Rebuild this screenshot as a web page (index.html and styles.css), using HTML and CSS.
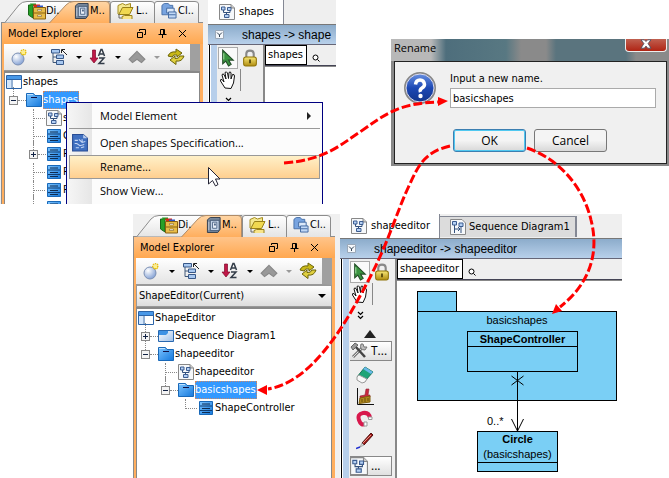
FILE: index.html
```html
<!DOCTYPE html>
<html lang="en">
<head>
<meta charset="utf-8">
<title>Model Explorer - Rename package</title>
<link rel="stylesheet" href="styles.css">
</head>
<body>
<svg class="defs" aria-hidden="true">
  <defs>
    <linearGradient id="g-orange" x2="0" y2="1"><stop offset="0" stop-color="#ffd6a6"/><stop offset="1" stop-color="#ffad5b"/></linearGradient>
    <linearGradient id="g-tab" x2="0" y2="1"><stop offset="0" stop-color="#fff"/><stop offset="1" stop-color="#e4e4e4"/></linearGradient>
    <linearGradient id="g-blue" x2="1" y2="1"><stop offset="0" stop-color="#7cc4ff"/><stop offset="1" stop-color="#1478dc"/></linearGradient>
    <linearGradient id="g-pale" x2="1" y2="1"><stop offset="0" stop-color="#fff"/><stop offset="1" stop-color="#9dbfe8"/></linearGradient>
    <linearGradient id="g-gold" x2="0" y2="1"><stop offset="0" stop-color="#f8e878"/><stop offset="1" stop-color="#b08c10"/></linearGradient>
    <radialGradient id="g-ball" cx=".35" cy=".3" r=".8"><stop offset="0" stop-color="#fff"/><stop offset="1" stop-color="#7898d0"/></radialGradient>
    <linearGradient id="g-quest" x2="0" y2="1"><stop offset="0" stop-color="#6c94e4"/><stop offset=".5" stop-color="#1c48b4"/><stop offset="1" stop-color="#123488"/></linearGradient>
  </defs>
  <symbol id="tabstrip" viewBox="0 0 204 23">
    <path d="M4.500 23 19 5Q22 1.500 27 1.500H110V23Z" fill="url(#g-tab)" stroke="#8c8c8c"/>
    <path d="M110.500 23V4Q110.500 1.500 113 1.500H151Q154.500 1.500 154.500 4V23M154.500 23V4Q154.500 1.500 157 1.500H195Q198.500 1.500 198.500 4V23" fill="url(#g-tab)" stroke="#8c8c8c"/>
    <path d="M49 23.500 66 5Q69 1.500 74 1.500H106Q109.500 1.500 109.500 5V23.500Z" fill="url(#g-orange)" stroke="#b08c68"/>
  </symbol>
  <symbol id="i-drawers" viewBox="0 0 18 18">
    <path d="M.500 3V13L5 16V3Z" fill="#28a028" stroke="#186818"/>
    <path d="M2 1.500H8V4H3Z" fill="#209820"/><path d="M5 2.500H12V5H6Z" fill="#d82818"/><path d="M9 3.500H15V6H9Z" fill="#3058c8"/>
    <path d="M5.500 5.500H17.500V17H5.500Z" fill="#e8bc48" stroke="#886010"/><path d="M6 11H17" stroke="#886010"/><path d="M9.500 7.500H13.500V9H9.500ZM9.500 13H13.500V14.500H9.500Z" fill="#fff" stroke="#806020" stroke-width=".6"/>
  </symbol>
  <symbol id="i-safe" viewBox="0 0 16 17">
    <path d="M1 3 4 .500H14.500V13L12 16.500H1Z" fill="#78889c" stroke="#303c4c"/><path d="M4 3.500H13.500V14.500H4Z" fill="#c4d4e8" stroke="#405470"/>
    <path d="M6.500 5.500H11V12H6.500Z" fill="#eef4fc" stroke="#506888"/><path d="M8 7H10V9H8Z" fill="#506888"/><path d="M2.500 5V14" stroke="#cbd4df"/>
  </symbol>
  <symbol id="i-folders" viewBox="0 0 17 18">
    <path d="M1.500 12V3.500L6 1.500 9 3 14 1.500V8" fill="#f4e890" stroke="#a48c20"/><path d="M2 13 6 5.500H16.500L13 12.500H2Z" fill="#f0d850" stroke="#988018"/>
    <path d="M5.500 17V14.500L8 13.500H15.500V17" fill="#f8e488" stroke="#988018"/><path d="M2.500 12V16H5" fill="none" stroke="#666"/>
  </symbol>
  <symbol id="i-classes" viewBox="0 0 16 17">
    <path d="M.500 12.500V2.500L3 .500H7L9 2.500H12V12.500Z" fill="#78a4e0" stroke="#4870a8"/><path d="M5.500 5.500H13.500V10.500H5.500Z" fill="#dce9fa" stroke="#4068a0"/><path d="M7.500 9.500H15.500V16H7.500Z" fill="#c0d8f6" stroke="#4068a0"/><path d="M8 12.500H15" stroke="#4068a0"/>
  </symbol>
  <symbol id="i-newball" viewBox="0 0 18 18">
    <circle cx="7" cy="11" r="6" fill="url(#g-ball)" stroke="#7c90b4"/>
    <path d="M9 4.500H16M12.500 1V8M10 2 15 7M15 2 10 7" stroke="#e8c010" stroke-width="1.500" stroke-dasharray="1.500 1"/><path d="M11 3H14V6H11Z" fill="#fff088"/>
  </symbol>
  <symbol id="i-hier" viewBox="0 0 18 18">
    <path d="M3 5V14.500H7M3 9H7" fill="none" stroke="#405878"/><path d="M1.500 1.500H9.500V5H1.500ZM6.500 7H13.500V10.500H6.500ZM6.500 12.500H13.500V16.500H6.500Z" fill="#a8c8f0" stroke="#385888"/><path d="M17 7 12 2M11.500 5V1.500H15" fill="none" stroke="#222"/>
  </symbol>
  <symbol id="i-sort" viewBox="0 0 17 18">
    <path d="M3 2H6V10H8.500L4.500 15 .500 10H3Z" fill="#c01848" stroke="#800828" stroke-width=".7"/><path d="M9 8 11.500 1.500H12.500L15 8M10 6H14M9.500 10H14.500L9.500 15.500H15" fill="none" stroke="#333c48" stroke-width="1.500"/>
  </symbol>
  <symbol id="i-up" viewBox="0 0 16 12"><path d="M8 1 15 8 12 11 8 8 4 11 1 8Z" fill="#999" stroke="#888"/></symbol>
  <symbol id="i-refresh" viewBox="0 0 18 18">
    <path d="M1 8Q3 3 9 4V1L15 5 10 9V7Q6 6 5 9Z" fill="#c8b818" stroke="#6c6408"/><path d="M17 8Q15 14 9 13V16.500L3 12 8 8V10.500Q12 11 13 8Z" fill="#e0d040" stroke="#6c6408"/>
  </symbol>
  <symbol id="i-root" viewBox="0 0 16 16"><path d="M.500 1.500H15.500V14.500H.500Z" fill="#fff" stroke="#2c64a8"/><path d="M1 2H15V5H1Z" fill="#4898e8"/><path d="M6 5.500V14M1 5.500H15" stroke="#2c64a8"/><path d="M1 6H5V14H1Z" fill="#d4e6fa"/></symbol>
  <symbol id="i-package" viewBox="0 0 16 16"><path d="M.500 14.500V1.500H7.500L9 3.500H15.500V14.500Z" fill="url(#g-blue)" stroke="#1868b8"/><path d="M5 5.500H11" stroke="#114"/><path d="M1 2.500H7" stroke="#bfe2ff"/></symbol>
  <symbol id="i-frame" viewBox="0 0 16 16"><path d="M.500 2.500H15.500V13.500H.500Z" fill="url(#g-pale)" stroke="#2868b0"/><path d="M1 3H10V5L8 7H1Z" fill="#3e92e4"/></symbol>
  <symbol id="i-class" viewBox="0 0 14 16"><path d="M.500 1.500H13.500V14.500H.500Z" fill="url(#g-blue)" stroke="#1868b8"/><path d="M1 6H13M1 10.500H13" stroke="#103c70"/><path d="M3 4H11M3 8.500H11M3 12.500H11" stroke="#102c50"/></symbol>
  <symbol id="i-diagram" viewBox="0 0 16 16"><path d="M.500.500H12L15.500 4V15.500H.500Z" fill="#f6f8fa" stroke="#888"/><path d="M12 .500V4H15.500" fill="#ccc" stroke="#888"/><path d="M4.500 6V8.500H11V6M7.500 8V11" fill="none" stroke="#33507c"/><path d="M2.500 3H6V6H2.500ZM8.500 3.500H12V6.500H8.500ZM5.500 10.500H10V13.500H5.500Z" fill="#b4d0f4" stroke="#3c5c90"/></symbol>
  <symbol id="i-mini" viewBox="0 0 9 9"><path d="M.500.500H8.500V8.500H.500Z" fill="#f4f7fb" stroke="#9aa8b8"/><path d="M2 2.500 4.500 5 7 2.500M4.500 5V7" fill="none" stroke="#345"/></symbol>
  <symbol id="i-seq" viewBox="0 0 16 16"><path d="M.500.500H12L15.500 4V15.500H.500Z" fill="#f6f8fa" stroke="#888"/><path d="M4.500 6V14M11 7V14M5 10H10M8 8 10 10 8 12" fill="none" stroke="#33507c"/><path d="M2.500 2.500H6.500V6H2.500ZM9 4H13V7.500H9Z" fill="#b4d0f4" stroke="#3c5c90"/></symbol>
  <symbol id="i-spec" viewBox="0 0 16 17"><path d="M1 .500H11L15 4V16H1Z" fill="#4070c0" stroke="#284c94"/><path d="M3 6H6M7 5 10 8 13 7M3 9H5L8 11 12 10M4 13H7M9 13 12 12M10 5V8" fill="none" stroke="#c4d6f4"/><path d="M11 .500V4H15" fill="#b8ccee"/></symbol>
  <symbol id="i-restore" viewBox="0 0 11 11"><path d="M3.500 3V1.500H9.500V6.500H8M1.500 4.500H6.500V9.500H1.500Z" fill="none" stroke="#000"/></symbol>
  <symbol id="i-pin" viewBox="0 0 11 11"><path d="M3.500 6V1.500H7.500V6M6.500 2V6M1.500 6.500H9.500M5.500 7V10" fill="none" stroke="#000"/></symbol>
  <symbol id="i-close" viewBox="0 0 9 9"><path d="M1 1 8 8M8 1 1 8" stroke="#000"/></symbol>
  <symbol id="i-pointer" viewBox="0 0 14 17"><path d="M2 1V14L5 11.500 7.500 16 10 14.500 7.500 10.500H12Z" fill="#3a9440" stroke="#244c28"/><path d="M3 4V10" stroke="#a0dca0"/></symbol>
  <symbol id="i-lock" viewBox="0 0 14 17"><path d="M3.500 8V4.500Q3.500 1.500 7 1.500T10.500 4.500V8" fill="none" stroke="#888" stroke-width="2"/><rect x="1" y="7.500" width="12" height="8.500" rx="2" fill="url(#g-gold)" stroke="#907408"/><path d="M7 10V13.500" stroke="#443804" stroke-width="1.500"/></symbol>
  <symbol id="i-hand" viewBox="0 0 18 20"><path d="M6 18 1.500 11Q1 9 3 9.500L5 12 3 5Q3.500 3 5 4.500L7 9 6 2.500Q7.500 1 8.500 3L9.500 8.500 10 2.500Q11.500 1 12 3L12 9 13.500 4.500Q15.500 4 15.500 6L14.500 13 12 18.500Z" fill="#fff" stroke="#111"/></symbol>
  <symbol id="i-chev" viewBox="0 0 7 9"><path d="M1 1 3.500 3.500 6 1M1 5 3.500 7.500 6 5" fill="none" stroke="#000" stroke-width="1.200"/></symbol>
  <symbol id="i-search" viewBox="0 0 8 8"><circle cx="3.500" cy="3.500" r="2.500" fill="#fff" stroke="#000"/><path d="M5.500 5.500 7.500 7.500" stroke="#000"/></symbol>
  <symbol id="i-tools" viewBox="0 0 18 18"><path d="M3 15 12 6" stroke="#777" stroke-width="3"/><path d="M3 15 12 6" stroke="#ddd"/><path d="M5 4 15 15" stroke="#444" stroke-width="2.500"/><path d="M1 5 5 1 8 3 3 8Z" fill="#999" stroke="#666"/><path d="M11 2Q9 8 15 8L17 5 14 5 13 2Z" fill="#bbb" stroke="#777"/></symbol>
  <symbol id="i-eraser" viewBox="0 0 18 18"><path d="M1 11 9 1 17 6 9 15Z" fill="#20a478" stroke="#187458"/><path d="M9 1 17 6 15 8 7 3Z" fill="#68b8e8"/><path d="M1 11 3 9 11 13 9 16 6 17 1 14Z" fill="#f8f8f8" stroke="#999"/></symbol>
  <symbol id="i-brush" viewBox="0 0 18 18"><path d="M1.500 0V16.500H18" fill="none" stroke="#111"/><path d="M10 1H13L12 7H14V9L4 11V8L9 7Z" fill="#c82840" stroke="#902030" stroke-width=".6"/><path d="M4 10 14 8V14L3 15.500Z" fill="#b08820" stroke="#80600c"/><path d="M6 11V14M9 10V14M12 10V13" stroke="#685008"/></symbol>
  <symbol id="i-magnet" viewBox="0 0 18 18"><path d="M14 8Q13 2 7 3T3 10T9 14" fill="none" stroke="#d8184c" stroke-width="4"/><path d="M12.500 7H16V9.500H12.500ZM8 12H11V16H8Z" fill="#fff" stroke="#999"/></symbol>
  <symbol id="i-pen" viewBox="0 0 18 18"><path d="M6 11 15 1 17 3 8 13Z" fill="#a01818" stroke="#501010"/><path d="M7 11 15 3" stroke="#e89080"/><path d="M6 11 8 13 4 15Z" fill="#ddd" stroke="#666" stroke-width=".5"/><path d="M4 15 0 16.500" stroke="#2030d0" stroke-width="1.500"/></symbol>
</svg>

<main class="desktop">

  <section class="shot shot-first">
    <aside class="explorer">
      <div class="tabs">
        <svg class="strip"><use href="#tabstrip"/></svg>
        <button class="tab tab-di"><svg class="i18"><use href="#i-drawers"/></svg>Di.</button>
        <button class="tab tab-mo"><svg class="i16"><use href="#i-safe"/></svg>M..</button>
        <button class="tab tab-lo"><svg class="i18"><use href="#i-folders"/></svg>L..</button>
        <button class="tab tab-cl"><svg class="i16"><use href="#i-classes"/></svg>Cl..</button>
      </div>
      <div class="panel">
        <header class="panel-title"><h2>Model Explorer</h2>
          <button aria-label="Restore"><svg class="i11"><use href="#i-restore"/></svg></button>
          <button aria-label="Pin"><svg class="i11"><use href="#i-pin"/></svg></button>
          <button aria-label="Close"><svg class="i9"><use href="#i-close"/></svg></button>
        </header>
        <div class="toolbar">
          <button aria-label="New"><svg class="i18"><use href="#i-newball"/></svg><i class="caret"></i></button>
          <button aria-label="Structure"><svg class="i18"><use href="#i-hier"/></svg><i class="caret"></i></button>
          <button aria-label="Sort"><svg class="i18"><use href="#i-sort"/></svg><i class="caret"></i></button>
          <button aria-label="Up"><svg class="i18"><use href="#i-up"/></svg><i class="caret dim"></i></button>
          <button aria-label="Refresh"><svg class="i18"><use href="#i-refresh"/></svg></button>
        </div>
        <ul class="tree">
          <li class="row"><svg class="i16"><use href="#i-root"/></svg>shapes</li>
          <li class="row d1"><i class="box"></i><i class="dots"></i><svg class="i16"><use href="#i-package"/></svg><span class="picked">shapes</span></li>
          <li class="row d2"><i class="dots long"></i><svg class="i16"><use href="#i-diagram"/></svg>s</li>
          <li class="row d2"><i class="dots long"></i><svg class="i16"><use href="#i-class"/></svg>C</li>
          <li class="row d2"><i class="box plus"></i><i class="dots"></i><svg class="i16"><use href="#i-class"/></svg>P</li>
          <li class="row d2"><i class="dots long"></i><svg class="i16"><use href="#i-class"/></svg>P</li>
          <li class="row d2"><i class="dots long"></i><svg class="i16"><use href="#i-class"/></svg>P</li>
          <li class="row d2"><i class="box plus"></i><i class="dots"></i><svg class="i16"><use href="#i-class"/></svg></li>
        </ul>
      </div>
    </aside>
    <div class="editor">
      <div class="etabs"><button class="etab on"><svg class="i16"><use href="#i-diagram"/></svg>shapes</button></div>
      <div class="crumb"><svg class="i9"><use href="#i-mini"/></svg><span>shapes -&gt; shape</span></div>
      <div class="work">
        <div class="palette">
          <div class="pair"><button class="sel" aria-label="Select"><svg class="i18"><use href="#i-pointer"/></svg></button><button aria-label="Lock"><svg class="i18"><use href="#i-lock"/></svg></button></div>
          <div class="pair"><button class="pan" aria-label="Pan"><svg class="i20"><use href="#i-hand"/></svg></button></div>
          <button class="more" aria-label="More"><svg class="i9"><use href="#i-chev"/></svg></button>
        </div>
        <div class="sheet">
          <div class="namebar"><span>shapes</span><svg class="i8"><use href="#i-search"/></svg></div>
          <div class="canvas"></div>
        </div>
      </div>
    </div>
    <ul class="menu" role="menu">
      <li><button>Model Element<i class="sub"></i></button></li>
      <li class="ruled"><button><svg class="i18"><use href="#i-spec"/></svg>Open shapes Specification...</button></li>
      <li><button class="hot">Rename...</button></li>
      <li><button>Show View...</button></li>
    </ul>
  </section>

  <section class="shot shot-second">
    <aside class="explorer">
      <div class="tabs">
        <svg class="strip"><use href="#tabstrip"/></svg>
        <button class="tab tab-di"><svg class="i18"><use href="#i-drawers"/></svg>Di.</button>
        <button class="tab tab-mo"><svg class="i16"><use href="#i-safe"/></svg>M..</button>
        <button class="tab tab-lo"><svg class="i18"><use href="#i-folders"/></svg>L..</button>
        <button class="tab tab-cl"><svg class="i16"><use href="#i-classes"/></svg>Cl..</button>
      </div>
      <div class="panel">
        <header class="panel-title"><h2>Model Explorer</h2>
          <button aria-label="Restore"><svg class="i11"><use href="#i-restore"/></svg></button>
          <button aria-label="Pin"><svg class="i11"><use href="#i-pin"/></svg></button>
          <button aria-label="Close"><svg class="i9"><use href="#i-close"/></svg></button>
        </header>
        <div class="toolbar">
          <button aria-label="New"><svg class="i18"><use href="#i-newball"/></svg><i class="caret"></i></button>
          <button aria-label="Structure"><svg class="i18"><use href="#i-hier"/></svg><i class="caret"></i></button>
          <button aria-label="Sort"><svg class="i18"><use href="#i-sort"/></svg><i class="caret"></i></button>
          <button aria-label="Up"><svg class="i18"><use href="#i-up"/></svg><i class="caret dim"></i></button>
          <button aria-label="Refresh"><svg class="i18"><use href="#i-refresh"/></svg></button>
        </div>
        <div class="combo"><select aria-label="Project"><option>ShapeEditor(Current)</option></select><i class="caret"></i></div>
        <ul class="tree">
          <li class="row"><svg class="i16"><use href="#i-root"/></svg>ShapeEditor</li>
          <li class="row d1"><i class="box plus"></i><i class="dots"></i><svg class="i16"><use href="#i-frame"/></svg>Sequence Diagram1</li>
          <li class="row d1"><i class="box"></i><i class="dots"></i><svg class="i16"><use href="#i-package"/></svg>shapeeditor</li>
          <li class="row d2"><i class="dots long"></i><svg class="i16"><use href="#i-diagram"/></svg>shapeeditor</li>
          <li class="row d2"><i class="box"></i><i class="dots"></i><svg class="i16"><use href="#i-package"/></svg><span class="picked">basicshapes</span></li>
          <li class="row d3"><i class="dots long last"></i><svg class="i16"><use href="#i-class"/></svg>ShapeController</li>
        </ul>
      </div>
    </aside>
    <div class="editor">
      <div class="etabs"><button class="etab on"><svg class="i16"><use href="#i-diagram"/></svg>shapeeditor</button><button class="etab"><svg class="i16"><use href="#i-seq"/></svg>Sequence Diagram1</button></div>
      <div class="crumb"><svg class="i9"><use href="#i-mini"/></svg><span>shapeeditor -&gt; shapeeditor</span></div>
      <div class="work">
        <div class="palette">
          <div class="pair"><button class="sel" aria-label="Select"><svg class="i18"><use href="#i-pointer"/></svg></button><button aria-label="Lock"><svg class="i18"><use href="#i-lock"/></svg></button></div>
          <div class="pair"><button class="pan" aria-label="Pan"><svg class="i20"><use href="#i-hand"/></svg></button></div>
          <button class="more" aria-label="More"><svg class="i9"><use href="#i-chev"/></svg></button>
          <i class="scroll-up"></i>
          <button class="group"><svg class="i18"><use href="#i-tools"/></svg>T...</button>
          <div class="tools">
            <button aria-label="Eraser"><svg class="i18"><use href="#i-eraser"/></svg></button>
            <button aria-label="Sweeper"><svg class="i18"><use href="#i-brush"/></svg></button>
            <button aria-label="Magnet"><svg class="i18"><use href="#i-magnet"/></svg></button>
            <button aria-label="Pen"><svg class="i18"><use href="#i-pen"/></svg></button>
          </div>
          <button class="group"><svg class="i18"><use href="#i-diagram"/></svg>...</button>
        </div>
        <div class="sheet">
          <div class="namebar"><span>shapeeditor</span><svg class="i8"><use href="#i-search"/></svg></div>
          <div class="canvas">
            <div class="node pkg-tab"></div>
            <div class="node pkg">basicshapes</div>
            <div class="node cls"><strong>ShapeController</strong></div>
            <svg class="assoc" viewBox="0 0 20 60"><path d="M10.500 0V59M4.500 4 16.500 13M16.500 4 4.500 13M4.500 47 10.500 59 16.500 47" fill="none" stroke="#000"/></svg>
            <span class="mult">0..*</span>
            <div class="node circle"><div><strong>Circle</strong>(basicshapes)</div></div>
          </div>
        </div>
      </div>
    </div>
  </section>

  <form class="dialog">
    <header class="dialog-title"><h2>Rename</h2><button type="button" class="x" aria-label="Close"><svg viewBox="0 0 14 12"><path d="M1 1H5L7 3 9 1H13L9.500 5.500 13 11H9L7 8.500 5 11H1L4.500 5.500Z" fill="#fff" stroke="#444c60"/></svg></button></header>
    <div class="dialog-body">
      <svg class="quest" viewBox="0 0 32 32"><circle cx="16" cy="16" r="15" fill="url(#g-quest)" stroke="#888" stroke-width="2"/><circle cx="16" cy="16" r="14" fill="none" stroke="#dde" stroke-width="1"/><path d="M11.500 12.500Q12 8 16 8T20.500 12.500Q20.500 14.500 18 16T16.500 20" fill="none" stroke="#fff" stroke-width="3.500"/><circle cx="16.500" cy="24" r="2.200" fill="#fff"/></svg>
      <div class="field"><label for="name">Input a new name.</label><input id="name" type="text" value="basicshapes"></div>
      <div class="actions"><button type="button" class="ok">OK</button><button type="button">Cancel</button></div>
    </div>
  </form>

  <svg class="arrows" viewBox="0 0 669 478" aria-hidden="true">
    <g fill="none" stroke="#f00" stroke-width="3" stroke-dasharray="9 3">
      <path d="M284 163C325 160 340 145 360 132C385 114 400 103 438 102"/>
      <path d="M450 146C424 152 418 166 408 188C396 214 388 244 367 283C345 325 312 382 268 389"/>
      <path d="M527 148C562 160 584 190 591 220C600 255 588 285 560 307"/>
    </g>
    <path d="M448 101 438 97V106ZM257 390 267 385V395ZM552 314 556 304 562 311Z" fill="#f00"/>
    <path d="M208.500 167.500V184L212.500 180.500 215.500 186 218 184.500 215.500 179H220Z" fill="#fff" stroke="#223"/>
  </svg>
</main>
</body>
</html>
```
FILE: styles.css
```css
* { box-sizing: border-box; }
body { margin: 0; background: #fff; color: #000; font: 11px/16px "DejaVu Sans Condensed", Tahoma, sans-serif; }
button { display: flex; align-items: center; margin: 0; padding: 0; border: 0; background: none; color: inherit; font: inherit; white-space: nowrap; }
h2 { margin: 0; font: inherit; }
ul { margin: 0; padding: 0; list-style: none; }
svg { display: block; flex: none; }
.defs { position: absolute; width: 0; height: 0; }
.i8 { width: 8px; height: 8px; }
.i9 { width: 9px; height: 9px; }
.i11 { width: 11px; height: 11px; }
.i16 { width: 16px; height: 16px; }
.i18 { width: 18px; height: 18px; }
.i20 { width: 20px; height: 20px; }

.desktop { position: relative; min-height: 100vh; overflow: hidden; }
.shot { position: absolute; display: flex; gap: 4px; overflow: hidden; background: #f0f0f0; }
.shot-first { top: 0; left: 0; width: 336px; height: 204px; }
.shot-second { top: 214px; left: 132px; right: 47px; bottom: 0; border-left: 1px solid #fff; }
.shot-second .explorer { margin-left: -1px; }

.explorer { display: flex; flex-direction: column; width: 204px; flex: none; background: #f0f0f0; }
.tabs { position: relative; display: flex; height: 22px; padding-left: 28px; flex: none; }
.strip { position: absolute; inset: 0; width: 204px; height: 23px; }
.tab { position: relative; overflow: hidden; }
.tab-di { width: 46px; }
.tab-mo { width: 42px; }
.tab-lo { width: 45px; gap: 2px; }
.tab-cl { width: 40px; gap: 1px; }
.panel { display: flex; flex-direction: column; flex: 1; margin: 0 1px; padding: 0 3px 0 2px; border: solid #8c8c8c; border-width: 1px 0 0 1px; background: #ffae5e; }
.panel-title { display: flex; align-items: center; gap: 10px; height: 21px; margin: 0 -3px 0 -2px; padding: 0 16px 0 6px; background: linear-gradient(#ffc48a, #ffa850); }
.panel-title h2 { flex: 1; }
.toolbar { display: flex; align-items: center; gap: 7px; height: 27px; padding-left: 7px; border: solid #999; border-width: 0 10px 1px 0; border-right-color: #a0a0a0; background: linear-gradient(#fff, #e4e4e4); }
.toolbar button { gap: 8px; }
.caret { border: solid transparent; border-width: 3px 3px 0; border-top-color: #000; }
.dim { border-top-color: #999; }
.combo { display: flex; align-items: center; height: 22px; padding-right: 5px; border: 1px solid #999; background: linear-gradient(#fff, #ddd); }
.combo select { flex: 1; min-width: 0; padding: 0 2px; border: 0; background: none; appearance: none; color: inherit; font: inherit; }
.combo .caret { border-width: 4px 4px 0; }
.tree { flex: 1; min-height: 0; overflow: hidden; border: solid #888; border-width: 2px 1px 0; background: #fff; }
.row { display: flex; align-items: center; height: 18px; padding-left: 1px; white-space: nowrap; }
.d1 { padding-left: 4px; }
.d2 { padding-left: 24px; }
.d3 { padding-left: 44px; }
.row svg { margin-right: 1px; }
.box { position: relative; width: 9px; height: 9px; border: 1px solid #888; background: linear-gradient(#124, #124) center / 5px 1px no-repeat #f4f4f4; }
.box::before { content: ""; position: absolute; left: 3px; top: -10px; height: 9px; border-left: 1px dotted #888; }
.plus { background: linear-gradient(#124, #124) center / 5px 1px no-repeat, linear-gradient(#124, #124) center / 1px 5px no-repeat #f4f4f4; }
.dots { width: 8px; border-top: 1px dotted #888; }
.long { width: 13px; margin-left: 4px; height: 18px; border-top: 0; border-left: 1px dotted #888; background: linear-gradient(90deg, #888 50%, transparent 50%) 0 9px / 2px 1px repeat-x; }
.last { height: 10px; align-self: flex-start; }
.picked { height: 18px; padding-right: 1px; outline: 1px dotted #c86; outline-offset: -1px; background: #3399ff; color: #fff; line-height: 18px; }

.editor { display: flex; flex-direction: column; flex: 1; min-width: 0; background: #fff; }
.etabs { display: flex; align-items: stretch; height: 25px; flex: none; border-bottom: 1px solid #777; background: #efefef; }
.etab { gap: 3px; margin: 2px 0 1px; padding: 0 5px 0 10px; border: solid #848894; border-width: 1px 2px 0 0; background: #dcdcdc; }
.etab.on { gap: 4px; margin: 0; padding: 0 9px 1px 11px; border-width: 0 1px 0 0; background: #fff; }
.crumb { display: flex; align-items: center; gap: 18px; height: 20px; flex: none; padding-left: 7px; overflow: hidden; border-bottom: 1px solid #667; background: linear-gradient(#8caccb, #b8d0ea); font: 12px/18px "Liberation Sans", sans-serif; white-space: nowrap; }
.work { display: flex; flex: 1; min-height: 0; border-left: 1px solid #fff; box-shadow: inset 1px 0 #000; }
.palette { display: flex; flex-direction: column; width: 54px; flex: none; overflow: hidden; margin-left: 2px; padding: 2px 0 0 1px; border: solid #888; border-width: 0 2px 0 0; border-left: 6px solid #b7cfeb; background: #efefef; }
.pair { display: flex; gap: 3px; height: 22px; flex: none; }
.sel { width: 20px; justify-content: center; border: 1px solid #aaa; background: #fafafa; }
.pan { padding-right: 2px; border-right: 1px solid #888; }
.more { height: 18px; margin-left: 6px; margin-top: 1px; flex: none; }
.scroll-up { margin: 6px 0 0 14px; width: 12px; flex: none; border: solid transparent; border-width: 0 6px 8px; border-bottom-color: #222; }
.group { height: 20px; margin: 3px 3px 0 0; gap: 3px; flex: none; border: solid #888; border-width: 1px 1px 1px 0; background: linear-gradient(#fff, #e0e0e0); font: 12px/16px "Open Sans", sans-serif; }
.tools { display: flex; flex-direction: column; gap: 4px; padding: 5px 0 3px 6px; }
.sheet { display: flex; flex-direction: column; flex: 1; min-width: 0; }
.namebar { display: flex; align-items: center; gap: 5px; height: 21px; flex: none; border-bottom: 1px solid #445; background: #efefef; }
.namebar span { height: 20px; padding: 0 3px 0 2px; border: 1px solid #000; background: #fff; line-height: 18px; }
.namebar svg { margin-top: 6px; }
.canvas { position: relative; flex: 1; border-top: 1px solid #888; background: #fff; }

.node { position: absolute; border: 1px solid #000; background: #7acff5; text-align: center; font: 11px/16px "Liberation Sans", sans-serif; }
.node strong { display: block; line-height: 14px; border-bottom: 1px solid #000; }
.pkg-tab { left: 20px; top: 10px; width: 40px; height: 21px; }
.pkg { left: 20px; top: 30px; width: 200px; height: 90px; }
.cls { left: 70px; top: 50px; width: 111px; height: 41px; }
.assoc { position: absolute; left: 110px; top: 91px; width: 20px; height: 60px; }
.mult { position: absolute; left: 90px; top: 132px; font: 11px/16px "Liberation Sans", sans-serif; }
.circle { left: 80px; top: 150px; width: 81px; height: 41px; }
.circle div { border-bottom: 1px solid #000; line-height: 15px; }
.circle strong { border: 0; line-height: 15px; }

.menu { position: absolute; left: 66px; top: 102px; width: 257px; height: 104px; padding: 1px 2px; border: 1px solid #000080; background: linear-gradient(90deg, #f6f6f6, #e6e6e6 25px, #fcfcfc 25px); font: 11px/16px "Open Sans", sans-serif; }
.menu button { position: relative; width: 100%; height: 24px; padding-left: 30px; border: 1px solid transparent; }
.menu svg { position: absolute; left: 1px; }
.menu .ruled { border-top: 1px solid #999; padding-top: 2px; }
.menu .hot { border-color: #999; background: linear-gradient(#fff0c8, #ffcf90); }
.sub { margin-left: auto; margin-right: 8px; border: solid transparent; border-width: 4px 0 4px 4px; border-left-color: #222; }

.dialog { position: absolute; left: 391px; top: 39px; width: 278px; padding: 0 2px 2px 3px; background: #888; }
.dialog-title { display: flex; justify-content: space-between; height: 22px; margin: 0 -2px 0 -3px; padding: 0 2px 0 3px; background: linear-gradient(90deg, #b8b8b8, #b8b8b8 40px, #4e6e7c 55px, #587882 115px, #8a8a8a 130px, #8a8a8a 155px, #5a747e 165px, #5a747e 235px, #8a8a8a 245px); }
.dialog-title h2 { font: 11px/18px "Open Sans", sans-serif; }
.x { align-items: flex-start; justify-content: center; width: 42px; height: 13px; border: 1px solid #eee; border-top: 0; border-radius: 0 0 4px 4px; background: linear-gradient(#c06050, #b02414); }
.x svg { width: 14px; height: 10px; }
.dialog-body { display: grid; grid-template-columns: 46px 1fr; row-gap: 21px; padding: 9px 10px 11px 9px; border: 1px solid #222; background: #f0f0f0; }
.quest { width: 32px; height: 32px; margin-top: 1px; }
.field { display: flex; flex-direction: column; gap: 1px; }
.field input { width: 100%; height: 20px; padding: 0 2px; border: 1px solid #aaa; background: #fff; color: #000; font: inherit; }
.actions { grid-column: 1 / -1; display: flex; gap: 8px; margin-left: 49px; }
.actions button { justify-content: center; width: 73px; height: 23px; border: 1px solid #777; border-radius: 3px; background: linear-gradient(#f4f4f4 50%, #d8d8d8); font: 12px/16px "Open Sans", sans-serif; }
.actions .ok { border-color: #3c7fb1; box-shadow: inset 0 0 0 1px #50c8f0; }
.arrows { position: absolute; left: 0; top: 0; width: 669px; height: 478px; pointer-events: none; }
```
